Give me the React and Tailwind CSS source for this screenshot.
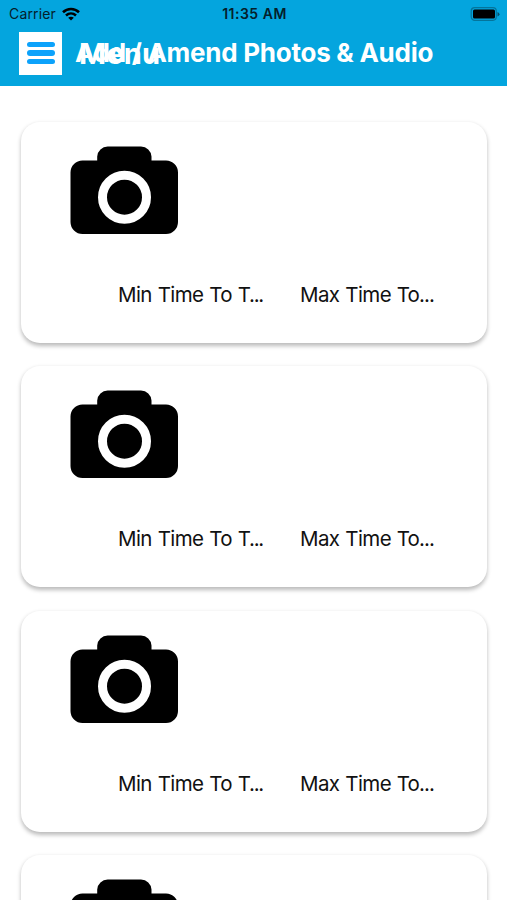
function Camera() {
  return (
    <svg className="block h-[88px] w-[108px]" viewBox="0 0 108 88" aria-hidden="true">
      <path
        d="M12.5 14.5H27.2V10.5A10.5 10.5 0 0 1 37.7 0.5H71A10.5 10.5 0 0 1 81.5 10.5V14.5H96A12 12 0 0 1 108 26.5V76A12 12 0 0 1 96 88H12.5A12 12 0 0 1 0.5 76V26.5A12 12 0 0 1 12.5 14.5Z"
        fill="#000"
      />
      <circle cx="54.5" cy="51.2" r="22" fill="none" stroke="#fff" strokeWidth="9" />
    </svg>
  );
}

function Card() {
  return (
    <section className="h-[221px] shrink-0 rounded-[19px] bg-white pt-[24px] shadow-[0_2.5px_4px_rgba(0,0,0,0.27)]">
      <div className="ml-[49px]">
        <Camera />
      </div>
      <div className="mt-[47px] flex pl-[97px] text-[20.5px] leading-[28px] text-[#111] whitespace-nowrap">
        <span className="w-[182px] tracking-[-0.6px] [word-spacing:0.7px]">
          Min Time To <span className="tracking-[-1.3px]">T...</span>
        </span>
        <span className="tracking-[-0.6px] [word-spacing:0.7px]">
          Max Time <span className="tracking-[-0.9px]">To...</span>
        </span>
      </div>
    </section>
  );
}

function StatusBar() {
  return (
    <div className="grid h-[28px] grid-cols-3 items-center pl-[9px] pr-[7px] text-[14px] leading-[28px] text-[#04202b]">
      <div className="flex items-center gap-[6px]">
        <span className="tracking-[0.15px]">Carrier</span>
        <svg className="h-[14px] w-[18px]" viewBox="0 0 18 14" fill="none" stroke="#000" strokeWidth="2.6" aria-hidden="true">
          <path d="M1 5.2C5.5 .9 12.5 .9 17 5.2" />
          <path d="M4 8.5C7 5.8 11 5.8 14 8.5" />
          <path d="M9 13.5L6.2 10.7C7.8 9.3 10.2 9.3 11.8 10.7Z" fill="#000" stroke="none" />
        </svg>
      </div>
      <span className="text-center font-semibold tracking-[0.5px] whitespace-nowrap">11:35 AM</span>
      <svg className="h-[14px] w-[30px] justify-self-end" viewBox="0 0 30 14" aria-hidden="true">
        <rect x="1.2" y="0.7" width="25.1" height="12.6" rx="3.5" fill="none" stroke="#04749b" strokeWidth="1.2" />
        <rect x="3" y="2.5" width="22" height="9" rx="1.5" fill="#000" />
        <path d="M27.5 5V9.5Q29.5 8.7 29.5 7.2T27.5 5Z" fill="#04526e" />
      </svg>
    </div>
  );
}

export default function App() {
  return (
    <div className="flex h-[900px] w-[507px] flex-col overflow-hidden bg-white font-['Inter','Liberation_Sans',sans-serif]">
      <header className="h-[86px] shrink-0 bg-[#04a5de]">
        <StatusBar />
        <div className="flex h-[50px] items-center pl-[19px] text-white">
          <div className="flex h-[43px] w-[43px] shrink-0 flex-col items-center justify-center gap-[3px] bg-white">
            <span className="h-[5.5px] w-[28px] rounded-full bg-[#0ca2fb]" />
            <span className="h-[5.5px] w-[28px] rounded-full bg-[#0ca2fb]" />
            <span className="h-[5.5px] w-[28px] rounded-full bg-[#0ca2fb]" />
          </div>
          <div className="relative ml-[13px] leading-[36px] whitespace-nowrap">
            <h1 className="text-[26px] font-bold tracking-[-0.26px]">Add / Amend Photos &amp; Audio</h1>
            <span className="absolute top-[1px] left-[4px] text-[29px] font-bold tracking-[0.2px]">Menu</span>
          </div>
        </div>
      </header>
      <main className="flex flex-col gap-[23.3px] pt-[36px] pr-[20px] pl-[21px]">
        <Card />
        <Card />
        <Card />
        <Card />
      </main>
    </div>
  );
}
